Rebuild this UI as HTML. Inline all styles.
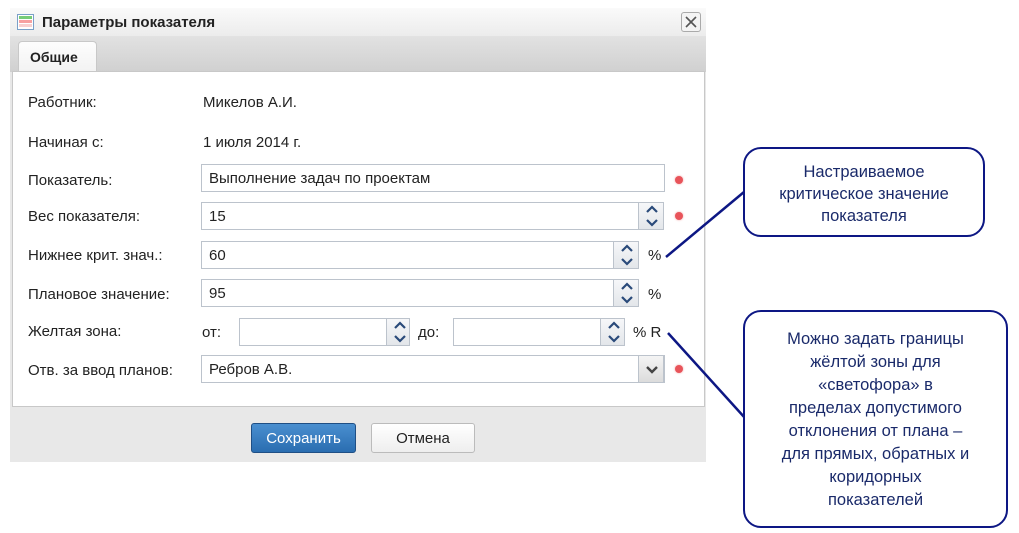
<!DOCTYPE html>
<html><head><meta charset="utf-8"><style>
*{margin:0;padding:0;box-sizing:border-box}
body{width:1019px;height:533px;background:#fff;position:relative;overflow:hidden;font-family:"Liberation Sans","DejaVu Sans",sans-serif;font-size:15px;color:#222}
.a{position:absolute}
.lbl{position:absolute;left:28px;line-height:20px}
.inp{position:absolute;height:28px;border:1px solid #bcc3cc;background:#fff;padding:4px 0 0 7px;line-height:20px;font-size:15px}
.sp{position:absolute;width:26px;height:28px;border:1px solid #bcc3cc;background:linear-gradient(#f6f7f9,#e3e6ea)}
.sp svg{position:absolute;left:5px}
.dot{position:absolute;width:8px;height:8px;border-radius:50%;background:#e8545a;box-shadow:0 0 2px #f0a0a0}
.box{position:absolute;border:2.5px solid #0d1784;border-radius:18px;background:#fff;color:#1a2a6a;text-align:center;font-size:16.5px}
</style></head><body>
<div class="a" style="left:10px;top:8px;width:696px;height:454px;background:#e8e8e8"></div>
<div class="a" style="left:10px;top:8px;width:696px;height:28px;background:linear-gradient(#fafafa,#ececec)"></div>
<svg class="a" style="left:17px;top:14px" width="17" height="16"><rect x="0.5" y="0.5" width="16" height="15" fill="#fff" stroke="#7aa0c8"/><rect x="2" y="2" width="13" height="3" fill="#7c7"/><rect x="2" y="6" width="13" height="3" fill="#f7a0a0"/><rect x="2" y="10" width="13" height="3" fill="#f8d0d0"/></svg>
<div class="a" style="left:42px;top:14px;font-weight:bold;font-size:15px;color:#222">Параметры показателя</div>
<div class="a" style="left:681px;top:12px;width:20px;height:20px;border:1px solid #aaa;border-radius:3px;background:#f4f4f4"><svg width="18" height="18"><path d="M4 4l10 10M14 4L4 14" stroke="#555" stroke-width="1.6"/></svg></div>
<div class="a" style="left:10px;top:36px;width:696px;height:36px;background:linear-gradient(#e2e2e2,#d0d0d0)"></div>
<div class="a" style="left:18px;top:41px;width:79px;height:32px;background:linear-gradient(#fdfdfd,#f2f2f2);border:1px solid #c8c8c8;border-bottom:none;border-radius:4px 4px 0 0;font-weight:bold;font-size:14px;padding:7px 0 0 11px">Общие</div>
<div class="a" style="left:12px;top:71px;width:693px;height:336px;background:#fff;border:1px solid #c8c8c8"></div>
<div class="lbl" style="top:93px">Работник:</div><div class="a" style="left:203px;top:94px">Микелов А.И.</div>
<div class="lbl" style="top:133px">Начиная с:</div><div class="a" style="left:203px;top:134px">1 июля 2014 г.</div>
<div class="lbl" style="top:171px">Показатель:</div><div class="inp" style="left:201px;top:164px;width:464px">Выполнение задач по проектам</div><div class="dot" style="left:675px;top:176px"></div>
<div class="lbl" style="top:207px">Вес показателя:</div><div class="inp" style="left:201px;top:202px;width:438px">15</div>
<div class="sp" style="left:638px;top:202px"><svg width="16" height="26"><path d="M3 9l5-5 5 5M3 17l5 5 5-5" fill="none" stroke="#2a4a7a" stroke-width="2.2"/></svg></div><div class="dot" style="left:675px;top:212px"></div>
<div class="lbl" style="top:246px">Нижнее крит. знач.:</div><div class="inp" style="left:201px;top:241px;width:413px">60</div>
<div class="sp" style="left:613px;top:241px"><svg width="16" height="26"><path d="M3 9l5-5 5 5M3 17l5 5 5-5" fill="none" stroke="#2a4a7a" stroke-width="2.2"/></svg></div><div class="a" style="left:648px;top:247px">%</div>
<div class="lbl" style="top:285px">Плановое значение:</div><div class="inp" style="left:201px;top:279px;width:413px">95</div>
<div class="sp" style="left:613px;top:279px"><svg width="16" height="26"><path d="M3 9l5-5 5 5M3 17l5 5 5-5" fill="none" stroke="#2a4a7a" stroke-width="2.2"/></svg></div><div class="a" style="left:648px;top:286px">%</div>
<div class="lbl" style="top:322px">Желтая зона:</div>
<div class="a" style="left:202px;top:324px">от:</div><div class="inp" style="left:239px;top:318px;width:148px"></div>
<div class="sp" style="left:386px;top:318px;width:24px"><svg width="16" height="26"><path d="M3 9l5-5 5 5M3 17l5 5 5-5" fill="none" stroke="#2a4a7a" stroke-width="2.2"/></svg></div>
<div class="a" style="left:418px;top:324px">до:</div><div class="inp" style="left:453px;top:318px;width:148px"></div>
<div class="sp" style="left:600px;top:318px;width:25px"><svg width="16" height="26"><path d="M3 9l5-5 5 5M3 17l5 5 5-5" fill="none" stroke="#2a4a7a" stroke-width="2.2"/></svg></div>
<div class="a" style="left:633px;top:324px">% R</div>
<div class="lbl" style="top:361px">Отв. за ввод планов:</div><div class="inp" style="left:201px;top:355px;width:464px">Ребров А.В.</div>
<div class="sp" style="left:638px;top:355px;background:linear-gradient(#f4f4f4,#dcdcdc)"><svg width="16" height="26"><path d="M3 11l5 5 5-5" fill="none" stroke="#444" stroke-width="2.4"/></svg></div><div class="dot" style="left:675px;top:365px"></div>
<div class="a" style="left:251px;top:423px;width:105px;height:30px;border:1px solid #1f4f85;border-radius:3px;background:linear-gradient(#4a8fd0,#2a6db0);color:#fff;text-align:center;line-height:30px">Сохранить</div>
<div class="a" style="left:371px;top:423px;width:104px;height:30px;border:1px solid #bbb;border-radius:3px;background:linear-gradient(#fff,#eee);text-align:center;line-height:30px">Отмена</div>
<svg class="a" style="left:0;top:0" width="1019" height="533"><path d="M666 257L744 192M668 333L745 418" stroke="#0d1784" stroke-width="2.5" fill="none"/></svg>
<div class="box" style="left:743px;top:147px;width:242px;height:90px;padding-top:12px;line-height:22px">Настраиваемое<br>критическое значение<br>показателя</div>
<div class="box" style="left:743px;top:310px;width:265px;height:218px;padding-top:16px;line-height:23px">Можно задать границы<br>жёлтой зоны для<br>«светофора» в<br>пределах допустимого<br>отклонения от плана –<br>для прямых, обратных и<br>коридорных<br>показателей</div>
</body></html>
